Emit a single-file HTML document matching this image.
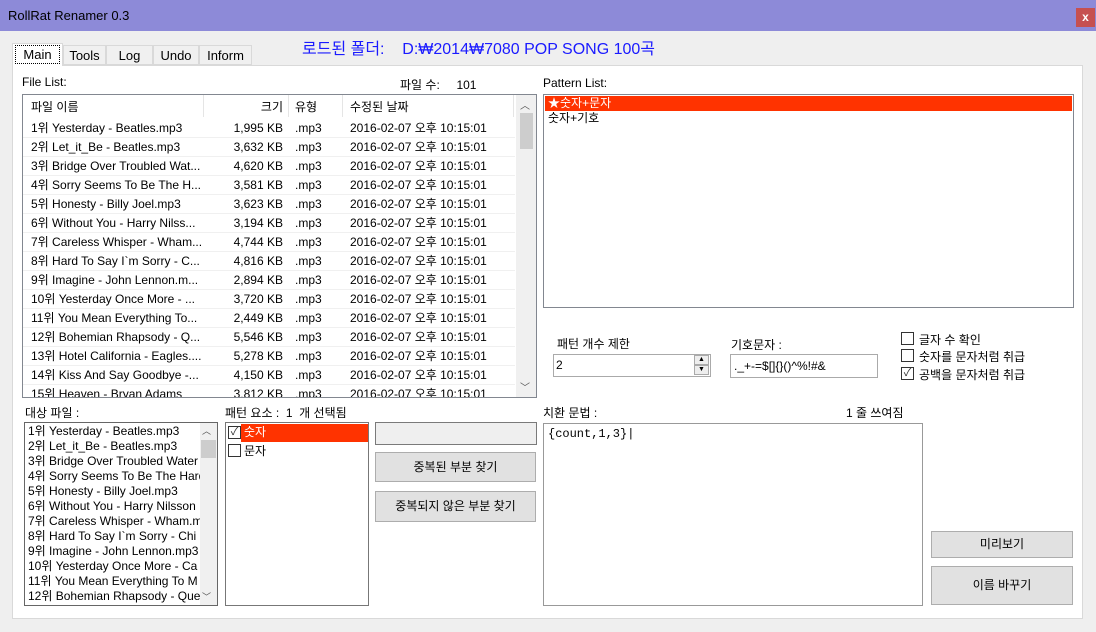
<!DOCTYPE html>
<html><head><meta charset="utf-8"><style>
*{margin:0;padding:0;box-sizing:border-box}
body{width:1096px;height:632px;background:#efefef;font-family:"Liberation Sans","Noto Sans CJK KR",sans-serif;font-size:12px;color:#000;position:relative;overflow:hidden}
.a{position:absolute;white-space:nowrap}
.box{position:absolute;background:#fff;border:1px solid #828790}
.row{position:absolute;left:0;height:19px;line-height:19px;width:492px;border-bottom:1px solid #f0f0f0}
.c{position:absolute;top:0;overflow:hidden;white-space:nowrap}
.btn{position:absolute;background:#e1e1e1;border:1px solid #adadad;text-align:center}
.cb{position:absolute;width:13px;height:13px;border:1px solid #333;background:#fff}
.li{height:15px;line-height:15px;padding-left:3px;white-space:nowrap;overflow:hidden}
</style></head><body>
<div class="a" style="left:0;top:0;width:1096px;height:31px;background:#8d8ad8"></div>
<div class="a" style="left:8px;top:8px;font-size:13px">RollRat Renamer 0.3</div>
<div class="a" style="left:1076px;top:8px;width:19px;height:19px;background:#c65050;color:#fff;font-weight:bold;text-align:center;line-height:18px;font-size:12px">x</div>

<div class="a" style="left:12px;top:65px;width:1071px;height:554px;background:#fff;border:1px solid #d9d9d9"></div>
<div class="a" style="left:12px;top:43px;width:51px;height:23px;background:#fff;border:1px solid #d9d9d9;border-bottom:none"></div>
<div class="a" style="left:15px;top:45px;width:45px;height:19px;border:1px dotted #000;text-align:center;line-height:17px;font-size:13px">Main</div>
<div class="a" style="left:63px;top:45px;width:43px;height:20px;background:#f0f0f0;border:1px solid #d9d9d9;line-height:19px;text-align:center;font-size:13px">Tools</div>
<div class="a" style="left:106px;top:45px;width:47px;height:20px;background:#f0f0f0;border:1px solid #d9d9d9;line-height:19px;text-align:center;font-size:13px">Log</div>
<div class="a" style="left:153px;top:45px;width:46px;height:20px;background:#f0f0f0;border:1px solid #d9d9d9;line-height:19px;text-align:center;font-size:13px">Undo</div>
<div class="a" style="left:199px;top:45px;width:53px;height:20px;background:#f0f0f0;border:1px solid #d9d9d9;line-height:19px;text-align:center;font-size:13px">Inform</div>
<div class="a" style="left:302px;top:40px;font-size:16px;color:#1a1aff;line-height:20px">로드된 폴더:&nbsp;&nbsp;&nbsp;&nbsp;D:₩2014₩7080 POP SONG 100곡</div>

<div class="a" style="left:22px;top:75px">File List:</div>
<div class="a" style="left:400px;top:76px">파일 수:&nbsp;&nbsp;&nbsp;&nbsp;&nbsp;101</div>

<div class="box" style="left:22px;top:94px;width:515px;height:304px;overflow:hidden">
 <div class="a" style="left:0;top:0;width:492px;height:24px;line-height:24px">
  <div class="c" style="left:8px">파일 이름</div>
  <div class="c" style="left:180px;width:1px;height:22px;background:#e5e5e5"></div>
  <div class="c" style="left:182px;width:78px;text-align:right">크기</div>
  <div class="c" style="left:265px;width:1px;height:22px;background:#e5e5e5"></div>
  <div class="c" style="left:272px">유형</div>
  <div class="c" style="left:319px;width:1px;height:22px;background:#e5e5e5"></div>
  <div class="c" style="left:327px">수정된 날짜</div>
  <div class="c" style="left:490px;width:1px;height:22px;background:#e5e5e5"></div>
 </div>
 <div id="rows"></div>
 <div class="a" style="left:493px;top:0;width:20px;height:303px;background:#f0f0f0"></div>
 <div class="a" style="left:497px;top:18px;width:13px;height:36px;background:#cdcdcd"></div>
 <div class="a" style="left:497px;top:2px;font-size:10px;color:#555">︿</div>
 <div class="a" style="left:497px;top:284px;font-size:10px;color:#555">﹀</div>
</div>

<div class="a" style="left:543px;top:76px">Pattern List:</div>
<div class="box" style="left:543px;top:94px;width:531px;height:214px;padding:1px">
 <div class="li" style="background:#ff3300;color:#fff">★숫자+문자</div>
 <div class="li">숫자+기호</div>
</div>

<div class="a" style="left:557px;top:335px">패턴 개수 제한</div>
<div class="box" style="left:553px;top:354px;width:158px;height:23px;border-color:#aaa;padding-left:2px;line-height:20px">2</div>
<div class="a" style="left:694px;top:355px;width:15px;height:10px;border:1px solid #aaa;background:#eee;font-size:7px;text-align:center;line-height:8px">▲</div>
<div class="a" style="left:694px;top:365px;width:15px;height:10px;border:1px solid #aaa;background:#eee;font-size:7px;text-align:center;line-height:8px">▼</div>
<div class="a" style="left:731px;top:336px">기호문자 :</div>
<div class="box" style="left:730px;top:354px;width:148px;height:24px;border-color:#aaa;padding-left:3px;line-height:22px">._+-=$[]{}()^%!#&amp;</div>

<div class="cb" style="left:901px;top:332px"></div><div class="a" style="left:919px;top:331px">글자 수 확인</div>
<div class="cb" style="left:901px;top:349px"></div><div class="a" style="left:919px;top:348px">숫자를 문자처럼 취급</div>
<div class="cb" style="left:901px;top:367px;font-size:11px;line-height:11px;text-align:center;color:#333">✓</div><div class="a" style="left:919px;top:366px">공백을 문자처럼 취급</div>

<div class="a" style="left:543px;top:404px">치환 문법 :</div>
<div class="a" style="left:846px;top:404px">1 줄 쓰여짐</div>
<div class="box" style="left:543px;top:423px;width:380px;height:183px;border-color:#999;font-family:'Liberation Mono',monospace;font-size:12px;padding:3px 4px">{count,1,3}|</div>

<div class="btn" style="left:931px;top:531px;width:142px;height:27px;line-height:25px">미리보기</div>
<div class="btn" style="left:931px;top:566px;width:142px;height:39px;line-height:37px">이름 바꾸기</div>

<div class="a" style="left:25px;top:404px">대상 파일 :</div>
<div class="box" style="left:24px;top:422px;width:194px;height:184px;padding:1px 0 0 3px;overflow:hidden;line-height:15px;border-color:#666;white-space:nowrap">
1위 Yesterday - Beatles.mp3<br>2위 Let_it_Be - Beatles.mp3<br>3위 Bridge Over Troubled Water<br>4위 Sorry Seems To Be The Hard<br>5위 Honesty - Billy Joel.mp3<br>6위 Without You - Harry Nilsson<br>7위 Careless Whisper - Wham.mp<br>8위 Hard To Say I`m Sorry - Chi<br>9위 Imagine - John Lennon.mp3<br>10위 Yesterday Once More - Ca<br>11위 You Mean Everything To M<br>12위 Bohemian Rhapsody - Que
</div>
<div class="a" style="left:200px;top:423px;width:17px;height:182px;background:#f0f0f0"></div>
<div class="a" style="left:201px;top:440px;width:15px;height:18px;background:#cdcdcd"></div>
<div class="a" style="left:202px;top:424px;font-size:9px;color:#555">︿</div>
<div class="a" style="left:202px;top:590px;font-size:9px;color:#555">﹀</div>

<div class="a" style="left:225px;top:404px">패턴 요소 :&nbsp;&nbsp;1&nbsp;&nbsp;개 선택됨</div>
<div class="box" style="left:225px;top:422px;width:144px;height:184px;border-color:#777"></div>
<div class="a" style="left:241px;top:424px;width:127px;height:18px;background:#ff3300;color:#fff;padding-left:3px;line-height:17px">숫자</div>
<div class="cb" style="left:228px;top:426px;font-size:11px;line-height:11px;text-align:center;color:#333">✓</div>
<div class="cb" style="left:228px;top:444px"></div><div class="a" style="left:244px;top:442px">문자</div>

<div class="a" style="left:375px;top:422px;width:162px;height:23px;background:#efefef;border:1px solid #7a7a7a"></div>
<div class="btn" style="left:375px;top:452px;width:161px;height:30px;line-height:28px">중복된 부분 찾기</div>
<div class="btn" style="left:375px;top:491px;width:161px;height:31px;line-height:29px">중복되지 않은 부분 찾기</div>

<script>
var d=[["1위 Yesterday - Beatles.mp3","1,995"],["2위 Let_it_Be - Beatles.mp3","3,632"],["3위 Bridge Over Troubled Wat...","4,620"],["4위 Sorry Seems To Be The H...","3,581"],["5위 Honesty - Billy Joel.mp3","3,623"],["6위 Without You - Harry Nilss...","3,194"],["7위 Careless Whisper - Wham...","4,744"],["8위 Hard To Say I`m Sorry - C...","4,816"],["9위 Imagine - John Lennon.m...","2,894"],["10위 Yesterday Once More - ...","3,720"],["11위 You Mean Everything To...","2,449"],["12위 Bohemian Rhapsody - Q...","5,546"],["13위 Hotel California - Eagles....","5,278"],["14위 Kiss And Say Goodbye -...","4,150"],["15위 Heaven - Bryan Adams","3,812"]];
var h="";d.forEach(function(r,i){h+='<div class="row" style="top:'+(24+i*19)+'px"><div class="c" style="left:8px;width:172px">'+r[0]+'</div><div class="c" style="left:182px;width:78px;text-align:right">'+r[1]+' KB</div><div class="c" style="left:272px">.mp3</div><div class="c" style="left:327px">2016-02-07 오후 10:15:01</div></div>';});
document.getElementById("rows").innerHTML=h;
</script>
</body></html>
